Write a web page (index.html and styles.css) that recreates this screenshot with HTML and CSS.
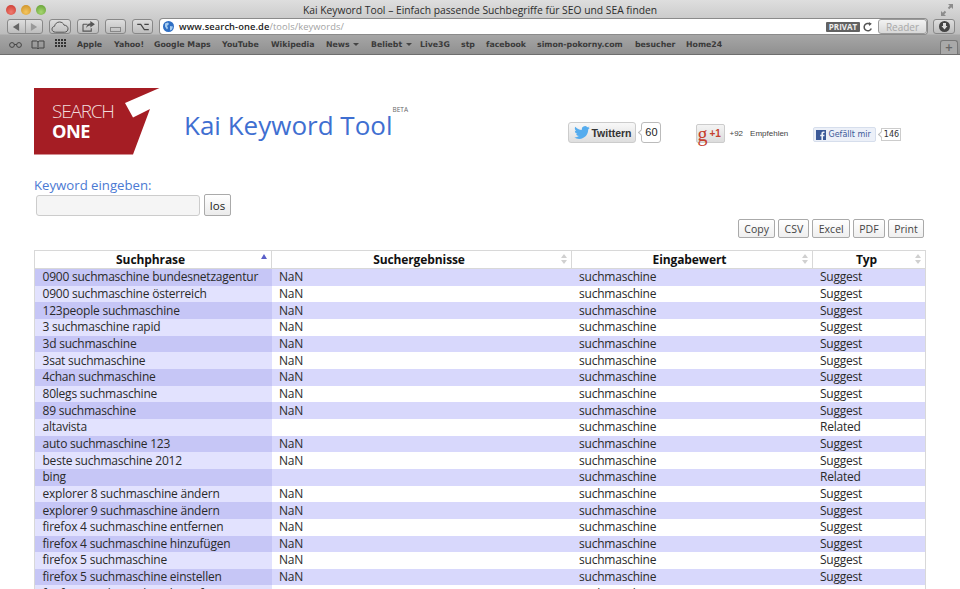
FILE: index.html
```html
<!DOCTYPE html>
<html lang="de">
<head>
    <meta charset="UTF-8">
    <title>Kai Keyword Tool</title>
    <link rel="stylesheet" href="styles.css">
</head>
<body>
    <div class="browser">
        <div class="titlebar">
            <div class="lights">
                <span class="light red"></span>
                <span class="light yellow"></span>
                <span class="light green"></span>
            </div>
            <div class="window-title">Kai Keyword Tool – Einfach passende Suchbegriffe für SEO und SEA finden</div>
            <svg class="fullscreen" width="12" height="12" viewBox="0 0 12 12"><path d="M7 0h5v5l-1.800-1.800-2 2-1.400-1.400 2-2zM5 12H0V7l1.800 1.800 2-2 1.400 1.400-2 2z" fill="#8c8c8c"/></svg>
        </div>
        <div class="toolbar">
            <div class="tool nav">
                <span class="nav-half"><svg width="8" height="8" viewBox="0 0 9 9"><path d="M8 0v9L1 4.500z" fill="#666"/></svg></span>
                <span class="nav-half"><svg width="8" height="8" viewBox="0 0 9 9"><path d="M1 0v9l7-4.500z" fill="#999"/></svg></span>
            </div>
            <div class="tool w22"><svg width="18" height="12" viewBox="0 0 18 12"><path d="M4.500 11.200C2.300 11.200 1 9.800 1 8.200c0-1.500 1-2.700 2.500-2.900C4 2.800 6 1 8.500 1c2.200 0 4 1.300 4.600 3.200 2.400-.1 3.900 1.700 3.900 3.600 0 1.900-1.500 3.400-3.500 3.400z" fill="none" stroke="#555" stroke-width="1"/></svg></div>
            <div class="tool w22"><svg width="13" height="11" viewBox="0 0 14 12"><path d="M1 3.500h5M1 3.500v7.500h9V8" fill="none" stroke="#555" stroke-width="1.200"/><path d="M9 0l5 3.500L9 7V5C7 5 5.500 6 4.500 8c0-3 1.500-5 4.500-5.500z" fill="#555"/></svg></div>
            <div class="tool w21"><span class="tabs-icon"></span></div>
            <div class="tool w21"><svg width="12" height="8" viewBox="0 0 13 9"><path d="M0 1.500h4l4 6h5M8 1.500h5" fill="none" stroke="#444" stroke-width="1.300"/></svg></div>
            <div class="address">
                <svg class="globe" width="11" height="11" viewBox="0 0 11 11"><circle cx="5.500" cy="5.500" r="5.500" fill="#2f6fc4"/><path d="M2 2.500l3-1 1 1.500-2 2 1 2-1 1.500-2-3zM7 5l3 .5-1 3-2 1z" fill="#a7cdf0"/></svg>
                <span class="url"><b>www.search-one.de</b>/tools/keywords/</span>
                <span class="privat">PRIVAT</span>
                <svg class="reload" width="10" height="10" viewBox="0 0 10 10"><path d="M8.300 6.500A3.700 3.700 0 1 1 7 2.100" fill="none" stroke="#555" stroke-width="1.500"/><path d="M5.800 0l3 1.800-2.600 2.200z" fill="#555"/></svg>
                <span class="reader">Reader</span>
            </div>
            <div class="tool download"><svg width="11" height="11" viewBox="0 0 11 11"><circle cx="5.500" cy="5.500" r="5.500" fill="#444"/><path d="M4 2h3v3h1.500L5.500 8.500 2.500 5H4z" fill="#ddd"/></svg></div>
        </div>
        <div class="bookmarks">
            <svg class="bm-icon" width="13" height="7" viewBox="0 0 13 7"><circle cx="3" cy="4" r="2.400" fill="none" stroke="#444"/><circle cx="10" cy="4" r="2.400" fill="none" stroke="#444"/><path d="M5.400 3.500h2.200" stroke="#444"/></svg>
            <svg class="bm-icon" width="14" height="9" viewBox="0 0 14 9"><path d="M1 1h4.500L7 2l1.500-1H13v7H8.500L7 9 5.500 8H1zM7 2v7" fill="none" stroke="#444"/></svg>
            <svg class="grid-icon" width="11" height="8" viewBox="0 0 11 8"><path d="M0 0h2v2H0zM3 0h2v2H3zM6 0h2v2H6zM9 0h2v2H9zM0 3h2v2H0zM3 3h2v2H3zM6 3h2v2H6zM9 3h2v2H9zM0 6h2v2H0zM3 6h2v2H3zM6 6h2v2H6zM9 6h2v2H9z" fill="#333"/></svg>
            <span class="bm apple">Apple</span>
            <span class="bm yahoo">Yahoo!</span>
            <span class="bm gmaps">Google Maps</span>
            <span class="bm youtube">YouTube</span>
            <span class="bm wiki">Wikipedia</span>
            <span class="bm news">News <i class="caret"></i></span>
            <span class="bm beliebt">Beliebt <i class="caret"></i></span>
            <span class="bm live">Live3G</span>
            <span class="bm stp">stp</span>
            <span class="bm fb">facebook</span>
            <span class="bm simon">simon-pokorny.com</span>
            <span class="bm besucher">besucher</span>
            <span class="bm home">Home24</span>
            <span class="new-tab">+</span>
        </div>
    </div>

    <div class="page">
        <div class="header">
            <div class="logo">
                <svg width="126" height="67" viewBox="0 0 126 67"><path d="M0 0H125.500L91 15 99 29.500 116 21 99 66.500H0z" fill="#a51d24"/></svg>
                <span class="logo-search">SEARCH</span>
                <span class="logo-one">ONE</span>
            </div>
            <h1 class="site-title">Kai Keyword Tool<sup class="beta">BETA</sup></h1>
            <div class="social">
                <div class="twitter">
                    <span class="tw-button"><svg width="16" height="13" viewBox="0 0 24 20"><path d="M23.950 2.570a10 10 0 0 1-2.820.78 4.960 4.960 0 0 0 2.160-2.730c-.95.560-2 .96-3.130 1.190a4.920 4.920 0 0 0-8.380 4.480C7.690 6.100 4.070 4.130 1.640 1.160a4.820 4.820 0 0 0-.67 2.480c0 1.710.87 3.210 2.190 4.100a4.900 4.900 0 0 1-2.230-.62v.06a4.920 4.920 0 0 0 3.950 4.830 5 5 0 0 1-2.210.08 4.940 4.940 0 0 0 4.600 3.420A9.870 9.870 0 0 1 0 17.610a14 14 0 0 0 7.560 2.210c9.050 0 14-7.500 14-13.990 0-.21 0-.42-.02-.63a9.940 9.940 0 0 0 2.410-2.630z" fill="#55acee"/></svg>Twittern</span>
                    <span class="tw-count">60</span>
                </div>
                <div class="gplus">
                    <span class="g-button"><span class="g-letter">g</span>+1</span>
                    <span class="g-count">+92</span>
                    <span class="g-label">Empfehlen</span>
                </div>
                <div class="facebook">
                    <span class="fb-button"><svg width="10" height="10" viewBox="0 0 10 10"><path d="M0 0h10v10H7V6.200h1.300l.2-1.500H7v-1c0-.5.200-.7.700-.7h.8V1.600H7.300C6 1.600 5.400 2.400 5.400 3.500v1.200H4.200v1.500h1.200V10H0z" fill="#3b5998"/></svg>Gefällt mir</span>
                    <span class="fb-count">146</span>
                </div>
            </div>
        </div>

        <form class="search">
            <label class="search-label" for="keyword">Keyword eingeben:</label>
            <div class="search-row">
                <input class="search-input" type="text" id="keyword">
                <button class="search-button" type="button">los</button>
            </div>
        </form>

        <div class="exports">
            <span class="export">Copy</span>
            <span class="export">CSV</span>
            <span class="export">Excel</span>
            <span class="export">PDF</span>
            <span class="export">Print</span>
        </div>

        <table class="results">
            <colgroup>
                <col class="c1"><col class="c2"><col class="c3"><col class="c4">
            </colgroup>
            <thead>
                <tr>
                    <th class="sorted">Suchphrase</th>
                    <th>Suchergebnisse</th>
                    <th>Eingabewert</th>
                    <th>Typ</th>
                </tr>
            </thead>
            <tbody>
                <tr><td>0900 suchmaschine bundesnetzagentur</td><td>NaN</td><td>suchmaschine</td><td>Suggest</td></tr>
                <tr><td>0900 suchmaschine österreich</td><td>NaN</td><td>suchmaschine</td><td>Suggest</td></tr>
                <tr><td>123people suchmaschine</td><td>NaN</td><td>suchmaschine</td><td>Suggest</td></tr>
                <tr><td>3 suchmaschine rapid</td><td>NaN</td><td>suchmaschine</td><td>Suggest</td></tr>
                <tr><td>3d suchmaschine</td><td>NaN</td><td>suchmaschine</td><td>Suggest</td></tr>
                <tr><td>3sat suchmaschine</td><td>NaN</td><td>suchmaschine</td><td>Suggest</td></tr>
                <tr><td>4chan suchmaschine</td><td>NaN</td><td>suchmaschine</td><td>Suggest</td></tr>
                <tr><td>80legs suchmaschine</td><td>NaN</td><td>suchmaschine</td><td>Suggest</td></tr>
                <tr><td>89 suchmaschine</td><td>NaN</td><td>suchmaschine</td><td>Suggest</td></tr>
                <tr><td>altavista</td><td></td><td>suchmaschine</td><td>Related</td></tr>
                <tr><td>auto suchmaschine 123</td><td>NaN</td><td>suchmaschine</td><td>Suggest</td></tr>
                <tr><td>beste suchmaschine 2012</td><td>NaN</td><td>suchmaschine</td><td>Suggest</td></tr>
                <tr><td>bing</td><td></td><td>suchmaschine</td><td>Related</td></tr>
                <tr><td>explorer 8 suchmaschine ändern</td><td>NaN</td><td>suchmaschine</td><td>Suggest</td></tr>
                <tr><td>explorer 9 suchmaschine ändern</td><td>NaN</td><td>suchmaschine</td><td>Suggest</td></tr>
                <tr><td>firefox 4 suchmaschine entfernen</td><td>NaN</td><td>suchmaschine</td><td>Suggest</td></tr>
                <tr><td>firefox 4 suchmaschine hinzufügen</td><td>NaN</td><td>suchmaschine</td><td>Suggest</td></tr>
                <tr><td>firefox 5 suchmaschine</td><td>NaN</td><td>suchmaschine</td><td>Suggest</td></tr>
                <tr><td>firefox 5 suchmaschine einstellen</td><td>NaN</td><td>suchmaschine</td><td>Suggest</td></tr>
                <tr><td>firefox 5 suchmaschine hinzufügen</td><td>NaN</td><td>suchmaschine</td><td>Suggest</td></tr>
            </tbody>
        </table>
    </div>
</body>
</html>
```

FILE: styles.css
```css
html, body {
  margin: 0;
  height: 589px;
  overflow: hidden;
  background: #fff;
}

body {
  font-family: "Open Sans", sans-serif;
  color: #222;
}

/* browser chrome */
.browser {
  height: 55px;
  background: linear-gradient(#dedede, #bcbcbc 34px, #a6a6a6 35px, #909090 54px);
  border-bottom: 1px solid #6e6e6e;
  box-sizing: border-box;
}

.titlebar {
  height: 19px;
  display: flex;
  align-items: center;
  padding: 0 6px;
}

.lights {
  display: flex;
  gap: 5px;
}

.light {
  width: 10px;
  height: 10px;
  border-radius: 50%;
}

.red { background: radial-gradient(circle at 50% 70%, #f07a6e, #c8352c); }
.yellow { background: radial-gradient(circle at 50% 70%, #f4c660, #c98a1e); }
.green { background: radial-gradient(circle at 50% 70%, #a6d670, #5d9a2e); }

.window-title {
  flex: 1;
  text-align: center;
  font-size: 10.300px;
  color: #2c2c2c;
  padding-right: 27px;
}

.fullscreen {
  margin-right: 1px;
}

.toolbar {
  height: 15px;
  display: flex;
  gap: 6px;
  padding-left: 7px;
}

.tool {
  height: 15px;
  box-sizing: border-box;
  display: flex;
  align-items: center;
  justify-content: center;
  border: 1px solid #888;
  border-radius: 3px;
  background: linear-gradient(#dedede, #bdbdbd);
}

.nav {
  width: 36px;
}

.nav-half {
  flex: 1;
  height: 100%;
  display: flex;
  align-items: center;
  justify-content: center;
}

.nav-half:first-child {
  border-right: 1px solid #999;
}

.w22 {
  width: 22px;
}

.w21 {
  width: 21px;
}

.tabs-icon {
  width: 9px;
  height: 3px;
  margin-top: 6px;
  border: 1px solid #888;
}

.address {
  width: 767px;
  height: 15px;
  margin-left: 1px;
  display: flex;
  align-items: center;
  background: #fff;
  border-radius: 3px;
  box-shadow: 0 0 0 1px #8b8b8b;
  font-size: 9.300px;
}

.globe {
  margin-left: 3px;
}

.url {
  flex: 1;
  margin-left: 5px;
  color: #a2a2a2;
  letter-spacing: 0.1px;
}

.url b {
  color: #222;
  font-weight: 600;
}

.privat {
  width: 34px;
  height: 10px;
  line-height: 10px;
  text-align: center;
  font-size: 8px;
  font-weight: 700;
  background: #626262;
  color: #eee;
  border-radius: 1px;
}

.reload {
  margin: 0 5px 0 3px;
}

.reader {
  width: 49px;
  height: 15px;
  line-height: 14px;
  box-sizing: border-box;
  text-align: center;
  font-size: 10px;
  color: #a8a8a8;
  border: 1px solid #9a9a9a;
  border-radius: 3px;
  background: linear-gradient(#f2f2f2, #d8d8d8);
}

.download {
  width: 22px;
}

.bookmarks {
  height: 20px;
  position: relative;
  display: flex;
  align-items: center;
  font-family: "DejaVu Sans", sans-serif;
  font-size: 7.800px;
  font-weight: 700;
  color: #3a3a3a;
}

.bm-icon {
  position: absolute;
  left: 9px;
}

.bm-icon + .bm-icon {
  left: 31px;
}

.grid-icon {
  position: absolute;
  left: 55px;
  top: 5px;
}

.bm {
  position: absolute;
  white-space: nowrap;
}

.apple { left: 77px; }
.yahoo { left: 114px; }
.gmaps { left: 154px; }
.youtube { left: 222px; }
.wiki { left: 271px; }
.news { left: 326px; }
.beliebt { left: 371px; }
.live { left: 420px; }
.stp { left: 461px; }
.fb { left: 486px; }
.simon { left: 537px; }
.besucher { left: 635px; }
.home { left: 686px; }

.caret {
  display: inline-block;
  margin-left: 1px;
  vertical-align: 1px;
  border: 3px solid transparent;
  border-top: 3px solid #444;
  border-bottom: 0;
}

.new-tab {
  position: absolute;
  left: 940px;
  top: 6px;
  width: 18px;
  height: 14px;
  text-align: center;
  color: #666;
  font-size: 10px;
  line-height: 14px;
  border: 1px solid #777;
  border-bottom: 0;
  border-radius: 3px 3px 0 0;
  box-sizing: border-box;
  background: #a9a9a9;
}

/* page */
.page {
  padding: 33px 34px 0;
}

.header {
  height: 67px;
  display: flex;
}

.logo {
  position: relative;
  width: 126px;
  height: 67px;
  color: #fff;
}

.logo-search {
  position: absolute;
  left: 18px;
  top: 13px;
  font-size: 19px;
  line-height: 20px;
  font-weight: 300;
  letter-spacing: -1.200px;
  color: #f0dcdc;
}

.logo-one {
  position: absolute;
  left: 18px;
  top: 34px;
  font-size: 18.200px;
  line-height: 19px;
  font-weight: 700;
  letter-spacing: -0.500px;
}

.site-title {
  margin: 17px 0 0 24px;
  font-size: 26px;
  line-height: 40px;
  font-weight: 400;
  color: #3f6fd1;
  white-space: nowrap;
  position: relative;
  height: 40px;
}

.beta {
  position: absolute;
  left: 100%;
  top: 0;
  font-size: 6.500px;
  line-height: 9px;
  color: #666;
}

.social {
  position: relative;
  flex: 1;
}

.twitter, .gplus, .facebook {
  position: absolute;
  display: flex;
  align-items: center;
  font-family: "Liberation Sans", sans-serif;
}

.twitter {
  left: 176px;
  top: 34px;
}

.tw-button {
  width: 68px;
  height: 21px;
  box-sizing: border-box;
  display: flex;
  align-items: center;
  gap: 1px;
  padding-left: 5px;
  font-size: 10.500px;
  font-weight: 700;
  color: #333;
  border: 1px solid #ccc;
  border-radius: 3px;
  background: linear-gradient(#f8f8f8, #dedede);
}

.tw-count {
  position: relative;
  width: 20px;
  height: 21px;
  margin-left: 5px;
  box-sizing: border-box;
  line-height: 18px;
  text-align: center;
  font-size: 11px;
  border: 1px solid #bbb;
  border-radius: 3px;
  background: #fff;
}

/* little notch on the count bubbles */
.tw-count::before, .fb-count::before {
  content: "";
  position: absolute;
  left: -3px;
  top: 7px;
  width: 4px;
  height: 4px;
  background: #fff;
  border-left: 1px solid #bbb;
  border-bottom: 1px solid #bbb;
  transform: rotate(45deg);
}

.gplus {
  left: 304px;
  top: 36px;
}

.g-button {
  width: 29px;
  height: 19px;
  box-sizing: border-box;
  display: flex;
  align-items: center;
  font-size: 10px;
  font-weight: 700;
  color: #c5402e;
  border: 1px solid #ccc;
  border-radius: 2px;
  background: linear-gradient(#f4f4f4, #dcdcdc);
}

.g-letter {
  font-family: "Liberation Serif", serif;
  font-size: 20px;
  font-weight: 400;
  line-height: 14px;
  margin-right: 2px;
}

.g-count {
  margin-left: 4px;
  font-size: 8px;
  color: #444;
}

.g-label {
  margin-left: 7px;
  font-size: 8px;
  color: #444;
}

.facebook {
  left: 421px;
  top: 39px;
  font-family: "DejaVu Sans", sans-serif;
}

.fb-button {
  width: 63px;
  height: 15px;
  box-sizing: border-box;
  display: flex;
  align-items: center;
  gap: 2px;
  padding-left: 2px;
  font-size: 8px;
  color: #3b5998;
  white-space: nowrap;
  border: 1px solid #d6deec;
  border-radius: 2px;
  background: #ecf0f8;
}

.fb-count {
  position: relative;
  width: 20px;
  height: 13px;
  margin-left: 5px;
  box-sizing: border-box;
  line-height: 11px;
  text-align: center;
  font-size: 8px;
  color: #333;
  border: 1px solid #ccc;
  background: #fff;
}

.fb-count::before {
  top: 3px;
}

.search {
  margin-top: 21px;
}

.search-label {
  display: block;
  height: 18px;
  line-height: 18px;
  font-size: 13.200px;
  color: #4b79d3;
}

.search-row {
  display: flex;
  gap: 4px;
  padding-left: 2px;
}

.search-input {
  width: 164px;
  height: 21px;
  margin: 1px 0 0;
  padding: 0;
  box-sizing: border-box;
  border: 1px solid #ccc;
  border-radius: 3px;
  background: #f5f5f5;
}

.search-button {
  width: 27px;
  height: 22px;
  padding: 0;
  font-family: "Open Sans", sans-serif;
  font-size: 11.500px;
  color: #222;
  border: 1px solid #aaa;
  border-radius: 2px;
  background: linear-gradient(#fff, #ebebeb);
}

.exports {
  display: flex;
  justify-content: flex-end;
  gap: 3px;
  height: 19px;
  margin: 3px 2px 12px 0;
}

.export {
  height: 19px;
  padding: 0 5.300px;
  box-sizing: border-box;
  line-height: 18px;
  font-size: 10.500px;
  color: #444;
  border: 1px solid #aaa;
  border-radius: 2px;
  background: linear-gradient(#fff, #efefef);
}

.results {
  width: 891px;
  border-collapse: collapse;
  table-layout: fixed;
  font-size: 12px;
  letter-spacing: -0.22px;
  border-left: 1px solid #d8d8d8;
  border-right: 1px solid #d8d8d8;
}

.c1 { width: 237px; }
.c2 { width: 300px; }
.c3 { width: 241px; }
.c4 { width: 113px; }

.results th {
  position: relative;
  height: 18px;
  padding: 0 5px 0 0;
  box-sizing: border-box;
  font-size: 12px;
  line-height: 16px;
  letter-spacing: -0.1px;
  font-weight: 700;
  color: #111;
  background: #fff;
  border: 1px solid #d8d8d8;
}

/* sort arrows */
.results th::after {
  content: "";
  position: absolute;
  right: 4px;
  top: 3px;
  width: 6px;
  height: 10px;
  background: #d0d0d0;
  clip-path: polygon(50% 0, 100% 40%, 0 40%, 50% 0, 0 60%, 100% 60%, 50% 100%, 0 60%);
}

.results th.sorted::after {
  background: #5a5fc8;
  clip-path: polygon(50% 0, 100% 50%, 0 50%);
}

.results td {
  height: 16.670px;
  padding: 0 0 0 7.500px;
  line-height: 16px;
  white-space: nowrap;
  color: #2a2a2a;
}

.results tbody tr:nth-child(odd) td { background: #d8d8fc; }
.results tbody tr:nth-child(even) td { background: #fff; }
.results tbody tr:nth-child(odd) td:first-child { background: #c6c6f6; }
.results tbody tr:nth-child(even) td:first-child { background: #e2e2fe; }
```
